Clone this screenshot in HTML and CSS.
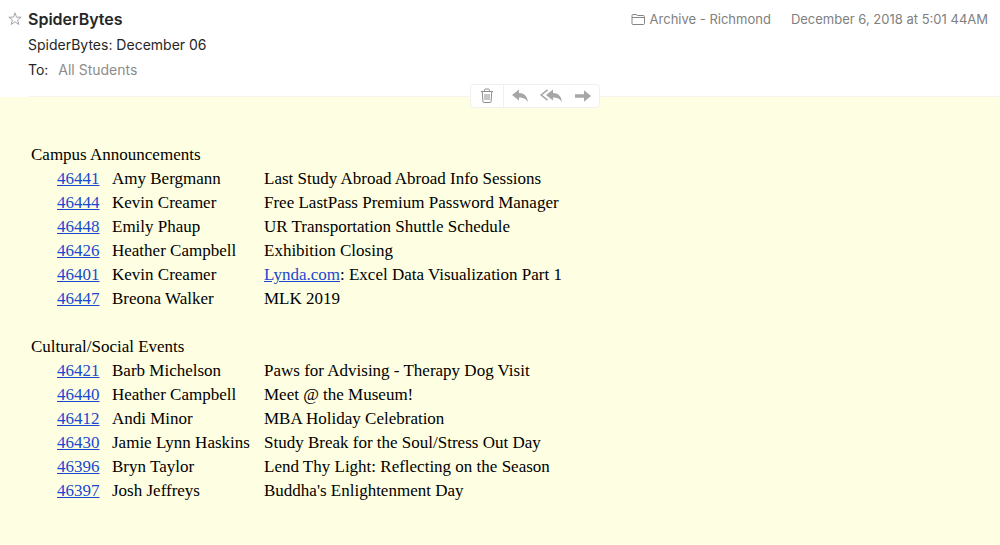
FILE: index.html
```html
<!DOCTYPE html>
<html lang="en">

<head>
    <meta charset="utf-8" />
    <meta name="viewport" content="width=device-width, initial-scale=1.0">
    <title>SpiderBytes: December 06</title>
    <link rel="stylesheet" href="styles.css">
</head>

<body>
    <header class="header">
        <button class="star" aria-label="Flag message">
            <svg width="14" height="14" viewBox="0 0 14 14" fill="none" stroke="#a6a6a6">
                <path d="M7 .8 8.5 5.2H13.2L9.5 7.9 10.9 12.5 7 9.8 3.1 12.5 4.5 7.9 .8 5.2H5.5Z" />
            </svg>
        </button>
        <div class="header-main">
            <div class="header-line">
                <h1 class="sender">SpiderBytes</h1>
                <div class="meta">
                    <span class="mailbox">
                        <svg width="15" height="13" viewBox="0 0 15 13" fill="none" stroke="#858585">
                            <path d="M1 10.5V2.5Q1 1.5 2 1.5H5L6.5 2.5H12.5Q13.5 2.5 13.5 3.5V10.5Q13.5 11.5 12.5 11.5H2Q1 11.5 1 10.5ZM1 4.5H13.5" />
                        </svg>
                        Archive - Richmond
                    </span>
                    <time datetime="2018-12-06T05:01:44">December 6, 2018 at 5:01 44AM</time>
                </div>
            </div>
            <div class="subject">SpiderBytes: December 06</div>
            <div class="recipients">To: <span class="recipient">All Students</span></div>
        </div>
        <!-- Floats over the border between header and message -->
        <div class="toolbar">
            <button class="tool tool-delete" aria-label="Delete">
                <svg width="14" height="16" viewBox="0 0 14 16" fill="none" stroke="#8e8e8e">
                    <path d="M1 3.5H13M4.5 3V2.2Q4.5 1 5.7 1H8.3Q9.5 1 9.5 2.2V3M2.3 4 2.9 13.5Q3 14.5 4 14.5H10Q11 14.5 11.1 13.5L11.7 4M5 6V12M7 6V12M9 6V12" />
                </svg>
            </button>
            <button class="tool" aria-label="Reply">
                <svg width="18" height="14" viewBox="0 0 18 14" fill="#a6a6a6">
                    <path d="M1 6 8 .5V4C13 4 16.3 7 17 13 14.5 9.5 12 8.5 8 8.5V11.5Z" />
                </svg>
            </button>
            <button class="tool" aria-label="Reply all">
                <svg width="23" height="14" viewBox="0 0 23 14" fill="#a6a6a6">
                    <path d="M6 6 13 .5V4C18 4 21.3 7 22 13 19.5 9.5 17 8.5 13 8.5V11.5Z" />
                    <path d="M7.5 .8 1.2 6 7.5 11.2" fill="none" stroke="#a6a6a6" stroke-width="1.6" />
                </svg>
            </button>
            <button class="tool" aria-label="Forward">
                <svg width="18" height="14" viewBox="0 0 18 14" fill="#a6a6a6">
                    <path d="M1 5.3H10V1.3L17 7 10 12.7V8.7H1Z" />
                </svg>
            </button>
        </div>
    </header>
    <main class="message">
        <section class="digest">
            <h2 class="digest-title">Campus Announcements</h2>
            <table class="digest-table">
                <tr><td class="number"><a href="#46441">46441</a></td><td class="author">Amy Bergmann</td><td>Last Study Abroad Abroad Info Sessions</td></tr>
                <tr><td class="number"><a href="#46444">46444</a></td><td class="author">Kevin Creamer</td><td>Free LastPass Premium Password Manager</td></tr>
                <tr><td class="number"><a href="#46448">46448</a></td><td class="author">Emily Phaup</td><td>UR Transportation Shuttle Schedule</td></tr>
                <tr><td class="number"><a href="#46426">46426</a></td><td class="author">Heather Campbell</td><td>Exhibition Closing</td></tr>
                <tr><td class="number"><a href="#46401">46401</a></td><td class="author">Kevin Creamer</td><td><a href="http://lynda.com">Lynda.com</a>: Excel Data Visualization Part 1</td></tr>
                <tr><td class="number"><a href="#46447">46447</a></td><td class="author">Breona Walker</td><td>MLK 2019</td></tr>
            </table>
        </section>
        <section class="digest">
            <h2 class="digest-title">Cultural/Social Events</h2>
            <table class="digest-table">
                <tr><td class="number"><a href="#46421">46421</a></td><td class="author">Barb Michelson</td><td>Paws for Advising - Therapy Dog Visit</td></tr>
                <tr><td class="number"><a href="#46440">46440</a></td><td class="author">Heather Campbell</td><td>Meet @ the Museum!</td></tr>
                <tr><td class="number"><a href="#46412">46412</a></td><td class="author">Andi Minor</td><td>MBA Holiday Celebration</td></tr>
                <tr><td class="number"><a href="#46430">46430</a></td><td class="author">Jamie Lynn Haskins</td><td>Study Break for the Soul/Stress Out Day</td></tr>
                <tr><td class="number"><a href="#46396">46396</a></td><td class="author">Bryn Taylor</td><td>Lend Thy Light: Reflecting on the Season</td></tr>
                <tr><td class="number"><a href="#46397">46397</a></td><td class="author">Josh Jeffreys</td><td>Buddha's Enlightenment Day</td></tr>
            </table>
        </section>
    </main>
</body>

</html>
```
FILE: styles.css
```css
body {
    margin: 0;
    min-height: 100vh;
    display: flex;
    flex-direction: column;
    background-color: #fff;
}

button {
    padding: 0;
    border: 0;
    background: none;
}

svg {
    display: block;
}

.header {
    position: relative;
    display: flex;
    gap: 6px;
    padding: 7px 0 0 8px;
    font-family: Inter, "Liberation Sans", sans-serif;
    font-size: 14px;
    line-height: 25px;
    color: #262626;
}

.star {
    width: 14px;
    height: 24px;
}

.header-main {
    flex: 1;
    padding: 0 12px 14px 0;
    border-bottom: 1px solid #f5f5f0;
}

.header-line {
    display: flex;
    justify-content: space-between;
}

.sender {
    margin: 0;
    font-size: 16px;
    font-weight: 600;
}

.meta {
    display: flex;
    gap: 20px;
    font-size: 13px;
    color: #808080;
}

.mailbox {
    display: flex;
    align-items: center;
    gap: 4px;
}

.recipient {
    margin-left: 6px;
    color: #8c8c8c;
}

.toolbar {
    position: absolute;
    left: 47%;
    bottom: -11px;
    display: flex;
    box-sizing: border-box;
    width: 130px;
    height: 24px;
    border: 1px solid #f0f0ee;
    border-radius: 4px;
    background-color: #fff;
}

.tool {
    flex: 1;
    display: flex;
    align-items: center;
    justify-content: center;
}

.tool-delete {
    border-right: 1px solid #f0f0f0;
}

.message {
    flex: 1;
    padding: 46px 31px 42px;
    background-color: #feffe2;
    font-family: "Liberation Serif", serif;
    font-size: 17px;
    line-height: 24px;
    color: #000;
}

.digest {
    margin-bottom: 24px;
}

.digest:last-child {
    margin-bottom: 0;
}

.digest-title {
    margin: 0;
    font-size: 17px;
    font-weight: normal;
}

.digest-table {
    margin-left: 26px;
    border-collapse: collapse;
}

.digest-table td {
    padding: 0;
}

.digest-table .number {
    width: 55px;
}

.digest-table .author {
    width: 152px;
}

a {
    color: #1a48d0;
}
```
